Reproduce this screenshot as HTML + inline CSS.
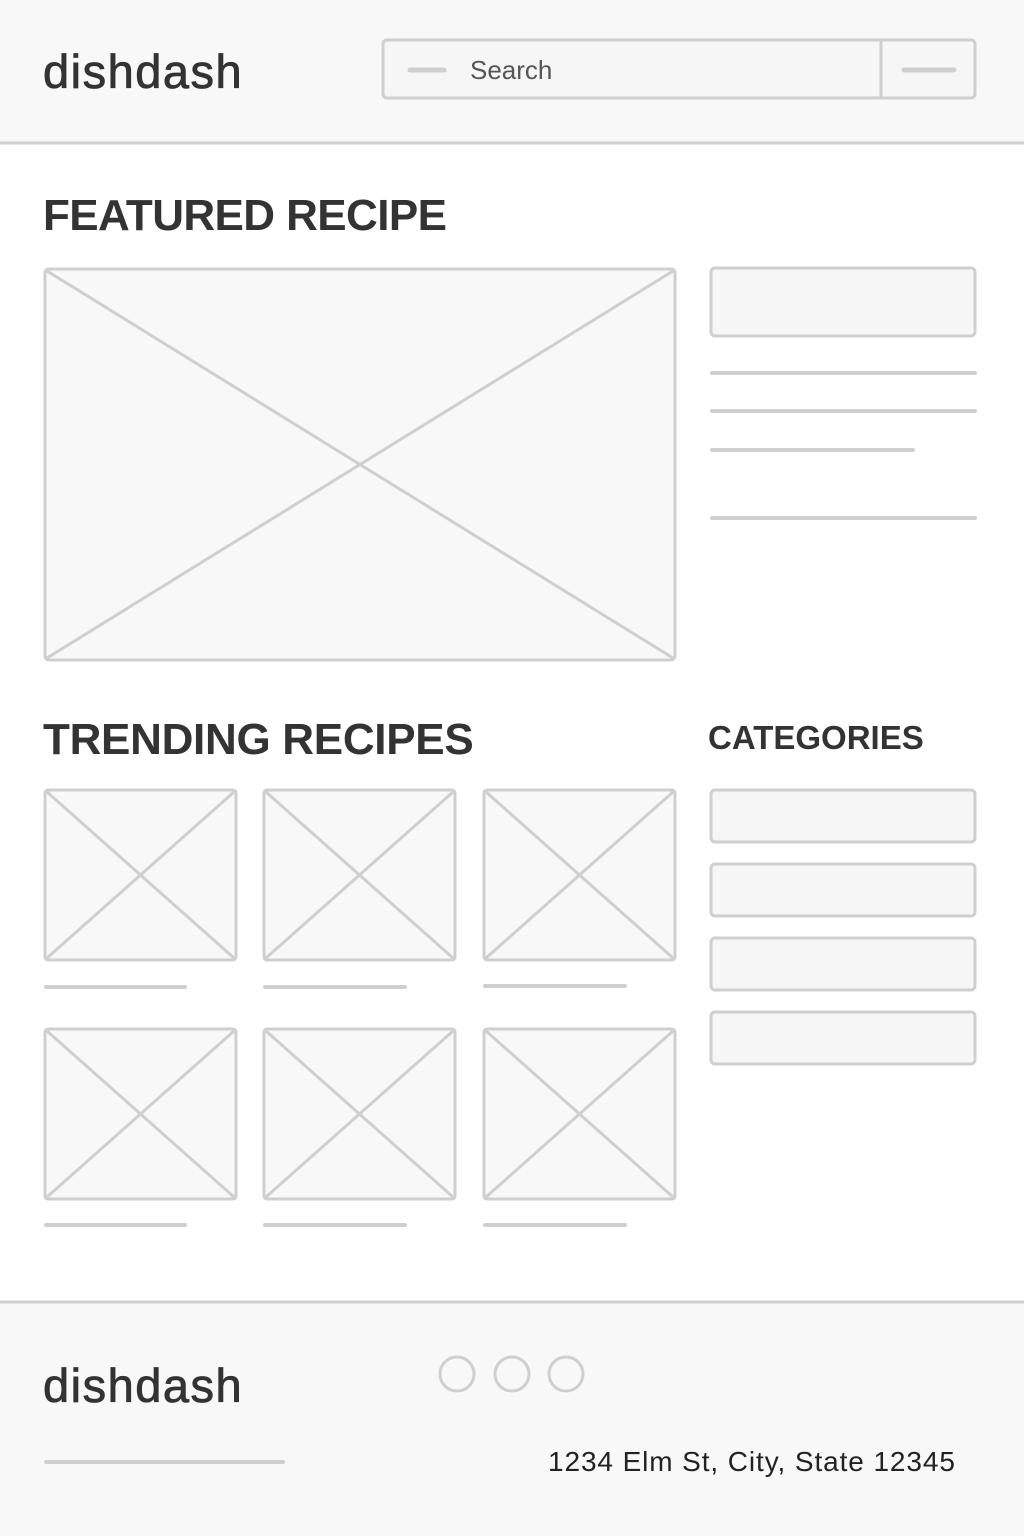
<!DOCTYPE html>
<html><head><meta charset="utf-8"><style>
body{margin:0;width:1024px;height:1536px;position:relative;background:#fff;font-family:"Liberation Sans",sans-serif;color:#333;overflow:hidden}
.t{position:absolute;white-space:nowrap;line-height:1}
svg{position:absolute;left:0;top:0}
.logo{font-size:47px;letter-spacing:1.5px;-webkit-text-stroke:0.8px #333}
</style></head><body>
<svg width="1024" height="1536" fill="none" stroke="#cfcfcf" stroke-width="3">
<rect x="0" y="0" width="1024" height="142" fill="#f8f8f8" stroke="none"/>
<line x1="0" y1="143" x2="1024" y2="143"/>
<rect x="0" y="1302" width="1024" height="234" fill="#f8f8f8" stroke="none"/>
<line x1="0" y1="1302" x2="1024" y2="1302"/>
<rect x="383" y="40" width="592" height="58" rx="4" fill="#f6f6f6"/>
<line x1="881" y1="40" x2="881" y2="98"/>
<line x1="410" y1="70" x2="444" y2="70" stroke-width="5" stroke-linecap="round"/>
<line x1="904" y1="70" x2="954" y2="70" stroke-width="5" stroke-linecap="round"/>
<rect x="45" y="269" width="630" height="391" rx="4" fill="#f8f8f8"/>
<line x1="47" y1="271" x2="673" y2="658"/><line x1="673" y1="271" x2="47" y2="658"/>
<rect x="711" y="268" width="264" height="68" rx="4" fill="#f6f6f6"/>
<g stroke-width="4" stroke-linecap="round">
<line x1="712" y1="373" x2="975" y2="373"/>
<line x1="712" y1="411" x2="975" y2="411"/>
<line x1="712" y1="450" x2="913" y2="450"/>
<line x1="712" y1="518" x2="975" y2="518"/>
</g>
<g fill="#f8f8f8">
<rect x="45" y="790" width="191" height="170" rx="3"/><path d="M47 792L234 958M234 792L47 958"/>
<rect x="264" y="790" width="191" height="170" rx="3"/><path d="M266 792L453 958M453 792L266 958"/>
<rect x="484" y="790" width="191" height="170" rx="3"/><path d="M486 792L673 958M673 792L486 958"/>
<rect x="45" y="1029" width="191" height="170" rx="3"/><path d="M47 1031L234 1197M234 1031L47 1197"/>
<rect x="264" y="1029" width="191" height="170" rx="3"/><path d="M266 1031L453 1197M453 1031L266 1197"/>
<rect x="484" y="1029" width="191" height="170" rx="3"/><path d="M486 1031L673 1197M673 1031L486 1197"/>
</g>
<g stroke-width="4" stroke-linecap="round">
<line x1="46" y1="987" x2="185" y2="987"/><line x1="265" y1="987" x2="405" y2="987"/><line x1="485" y1="986" x2="625" y2="986"/>
<line x1="46" y1="1225" x2="185" y2="1225"/><line x1="265" y1="1225" x2="405" y2="1225"/><line x1="485" y1="1225" x2="625" y2="1225"/>
<line x1="46" y1="1462" x2="283" y2="1462"/>
</g>
<g fill="#f6f6f6">
<rect x="711" y="790" width="264" height="52" rx="4"/>
<rect x="711" y="864" width="264" height="52" rx="4"/>
<rect x="711" y="938" width="264" height="52" rx="4"/>
<rect x="711" y="1012" width="264" height="52" rx="4"/>
</g>
<circle cx="457" cy="1374" r="17"/><circle cx="512" cy="1374" r="17"/><circle cx="566" cy="1374" r="17"/>
</svg>
<div class="t logo" style="left:43px;top:48px">dishdash</div>
<div class="t" style="left:470px;top:57px;font-size:26px;color:#555">Search</div>
<div class="t" style="left:43px;top:194px;font-size:44px;font-weight:bold;letter-spacing:-0.6px">FEATURED RECIPE</div>
<div class="t" style="left:43px;top:718px;font-size:44px;font-weight:bold;letter-spacing:-0.3px">TRENDING RECIPES</div>
<div class="t" style="left:708px;top:721px;font-size:33px;font-weight:bold">CATEGORIES</div>
<div class="t logo" style="left:43px;top:1362px">dishdash</div>
<div class="t" style="left:548px;top:1448px;font-size:28px;color:#222;letter-spacing:0.9px">1234 Elm St, City, State 12345</div>
</body></html>
